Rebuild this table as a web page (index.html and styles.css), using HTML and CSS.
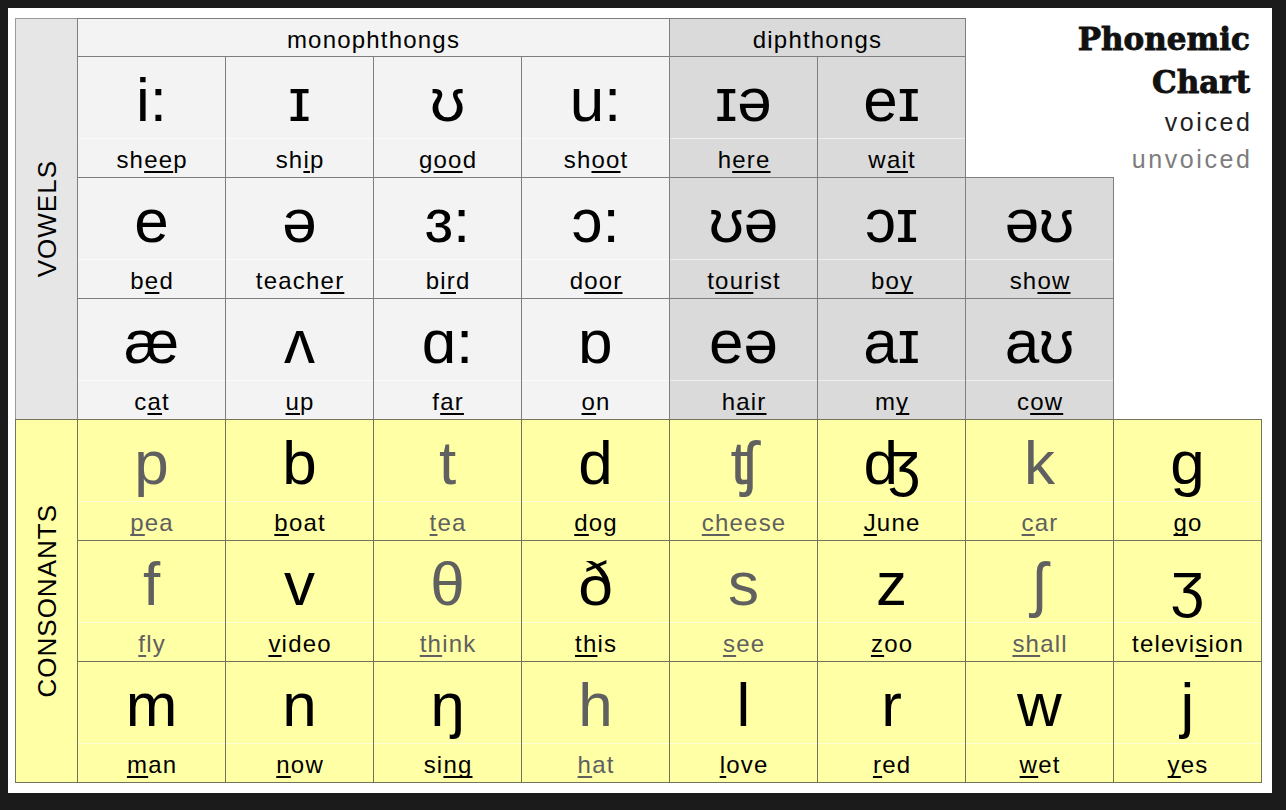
FILE: index.html
```html
<!DOCTYPE html>
<html lang="en">
<head>
<meta charset="utf-8">
<title>Phonemic Chart</title>
<link rel="stylesheet" href="styles.css">
</head>
<body>
<div class="frame">
  <div class="chart">
    <div class="label vlabel"><span>VOWELS</span></div>
    <div class="head mono">monophthongs</div>
    <div class="head diph">diphthongs</div>
    <div class="title">
      <div class="t1">Phonemic</div>
      <div class="t1">Chart</div>
      <div class="t2">voiced</div>
      <div class="t2 unv">unvoiced</div>
    </div>
    <div class="blank"></div>

    <div class="cell mono"><div class="sym">i:</div><div class="word">sh<u>ee</u>p</div></div>
    <div class="cell mono"><div class="sym">ɪ</div><div class="word">sh<u>i</u>p</div></div>
    <div class="cell mono"><div class="sym">ʊ</div><div class="word">g<u>oo</u>d</div></div>
    <div class="cell mono"><div class="sym">u:</div><div class="word">sh<u>oo</u>t</div></div>
    <div class="cell diph"><div class="sym">ɪə</div><div class="word">h<u>ere</u></div></div>
    <div class="cell diph"><div class="sym">eɪ</div><div class="word">w<u>ai</u>t</div></div>

    <div class="cell mono"><div class="sym">e</div><div class="word">b<u>e</u>d</div></div>
    <div class="cell mono"><div class="sym">ə</div><div class="word">teach<u>er</u></div></div>
    <div class="cell mono"><div class="sym">ɜ:</div><div class="word">b<u>ir</u>d</div></div>
    <div class="cell mono"><div class="sym">ɔ:</div><div class="word">d<u>oor</u></div></div>
    <div class="cell diph"><div class="sym">ʊə</div><div class="word">t<u>our</u>ist</div></div>
    <div class="cell diph"><div class="sym">ɔɪ</div><div class="word">b<u>oy</u></div></div>
    <div class="cell diph"><div class="sym">əʊ</div><div class="word">sh<u>ow</u></div></div>

    <div class="cell mono"><div class="sym">æ</div><div class="word">c<u>a</u>t</div></div>
    <div class="cell mono"><div class="sym">ʌ</div><div class="word"><u>u</u>p</div></div>
    <div class="cell mono"><div class="sym">ɑ:</div><div class="word">f<u>ar</u></div></div>
    <div class="cell mono"><div class="sym">ɒ</div><div class="word"><u>o</u>n</div></div>
    <div class="cell diph"><div class="sym">eə</div><div class="word">h<u>air</u></div></div>
    <div class="cell diph"><div class="sym">aɪ</div><div class="word">m<u>y</u></div></div>
    <div class="cell diph"><div class="sym">aʊ</div><div class="word">c<u>ow</u></div></div>

    <div class="label clabel"><span>CONSONANTS</span></div>

    <div class="cell cons unv"><div class="sym">p</div><div class="word"><u>p</u>ea</div></div>
    <div class="cell cons"><div class="sym">b</div><div class="word"><u>b</u>oat</div></div>
    <div class="cell cons unv"><div class="sym">t</div><div class="word"><u>t</u>ea</div></div>
    <div class="cell cons"><div class="sym">d</div><div class="word"><u>d</u>og</div></div>
    <div class="cell cons unv"><div class="sym">ʧ</div><div class="word"><u>ch</u>eese</div></div>
    <div class="cell cons"><div class="sym">ʤ</div><div class="word"><u>J</u>une</div></div>
    <div class="cell cons unv"><div class="sym">k</div><div class="word"><u>c</u>ar</div></div>
    <div class="cell cons"><div class="sym">g</div><div class="word"><u>g</u>o</div></div>

    <div class="cell cons unv"><div class="sym">f</div><div class="word"><u>f</u>ly</div></div>
    <div class="cell cons"><div class="sym">v</div><div class="word"><u>v</u>ideo</div></div>
    <div class="cell cons unv"><div class="sym">θ</div><div class="word"><u>th</u>ink</div></div>
    <div class="cell cons"><div class="sym">ð</div><div class="word"><u>th</u>is</div></div>
    <div class="cell cons unv"><div class="sym">s</div><div class="word"><u>s</u>ee</div></div>
    <div class="cell cons"><div class="sym">z</div><div class="word"><u>z</u>oo</div></div>
    <div class="cell cons unv"><div class="sym">ʃ</div><div class="word"><u>sh</u>all</div></div>
    <div class="cell cons"><div class="sym">ʒ</div><div class="word">televi<u>s</u>ion</div></div>

    <div class="cell cons"><div class="sym">m</div><div class="word"><u>m</u>an</div></div>
    <div class="cell cons"><div class="sym">n</div><div class="word"><u>n</u>ow</div></div>
    <div class="cell cons"><div class="sym">ŋ</div><div class="word">si<u>ng</u></div></div>
    <div class="cell cons unv"><div class="sym">h</div><div class="word"><u>h</u>at</div></div>
    <div class="cell cons"><div class="sym">l</div><div class="word"><u>l</u>ove</div></div>
    <div class="cell cons"><div class="sym">r</div><div class="word"><u>r</u>ed</div></div>
    <div class="cell cons"><div class="sym">w</div><div class="word"><u>w</u>et</div></div>
    <div class="cell cons"><div class="sym">j</div><div class="word"><u>y</u>es</div></div>
  </div>
</div>
</body>
</html>
```

FILE: styles.css
```css
html, body {
  margin: 0;
  padding: 0;
  background: #1b1b1b;
}

body {
  width: 1286px;
  height: 810px;
  overflow: hidden;
  font-family: "Liberation Sans", Arial, "DejaVu Sans", sans-serif;
  color: #000;
}

.frame {
  margin: 8px 0 0 8px;
  width: 1264px;
  height: 785px;
  background: #ffffff;
  box-sizing: border-box;
  padding: 10px 0 0 7px;
}

.chart {
  display: grid;
  grid-template-columns: 62px repeat(8, 148px);
  grid-template-rows: 38px repeat(6, 121px);
}

.label,
.head,
.cell {
  border: 1px solid #7e7e7e;
  margin: 0 -1px -1px 0;
}

.label {
  display: flex;
  align-items: center;
  justify-content: center;
}

.label span {
  writing-mode: vertical-rl;
  transform: rotate(180deg);
  font-size: 26px;
  letter-spacing: 1px;
  line-height: 26px;
}

.vlabel {
  grid-column: 1;
  grid-row: 1 / 5;
  background: #e6e6e6;
  border-color: #9a9a9a;
}

.clabel {
  grid-column: 1;
  grid-row: 5 / 8;
  background: #ffffa6;
  border-color: #74745a;
}

.head {
  font-size: 24px;
  line-height: 24px;
  letter-spacing: 1.2px;
  text-align: center;
  padding-top: 9px;
  box-sizing: border-box;
}

.head.mono {
  grid-column: span 4;
}

.head.diph {
  grid-column: span 2;
}

.mono {
  background: #f3f3f3;
}

.diph {
  background: #dadada;
}

.title {
  grid-column: 8 / 10;
  grid-row: 1 / 3;
  text-align: right;
  padding-right: 11px;
}

.t1 {
  font-family: "DejaVu Serif", "Liberation Serif", serif;
  font-weight: bold;
  font-size: 31px;
  line-height: 43px;
  color: #111;
  -webkit-text-stroke: 0.9px #111;
}

.t2 {
  font-size: 25px;
  line-height: 37px;
  letter-spacing: 2.6px;
  margin-right: -2.6px;
  color: #222;
}

.t2.unv {
  color: #7d7d7d;
}

.blank {
  grid-column: 9;
  grid-row: 3 / 5;
}

.cell {
  display: flex;
  flex-direction: column;
}

.cons {
  background: #ffffa6;
  border-color: #74745a;
}

.sym {
  height: 81px;
  box-sizing: border-box;
  padding-top: 12px;
  font-size: 62px;
  line-height: 62px;
  text-align: center;
}

.word {
  border-top: 1px solid rgba(255, 255, 255, 0.55);
  padding-top: 9px;
  padding-left: 1.2px;
  font-size: 24px;
  line-height: 24px;
  letter-spacing: 1.2px;
  text-align: center;
}

.word u {
  text-decoration: underline;
  text-decoration-thickness: 2px;
  text-underline-offset: 3px;
  text-decoration-skip-ink: none;
}

.unv {
  color: #606060;
}
```
